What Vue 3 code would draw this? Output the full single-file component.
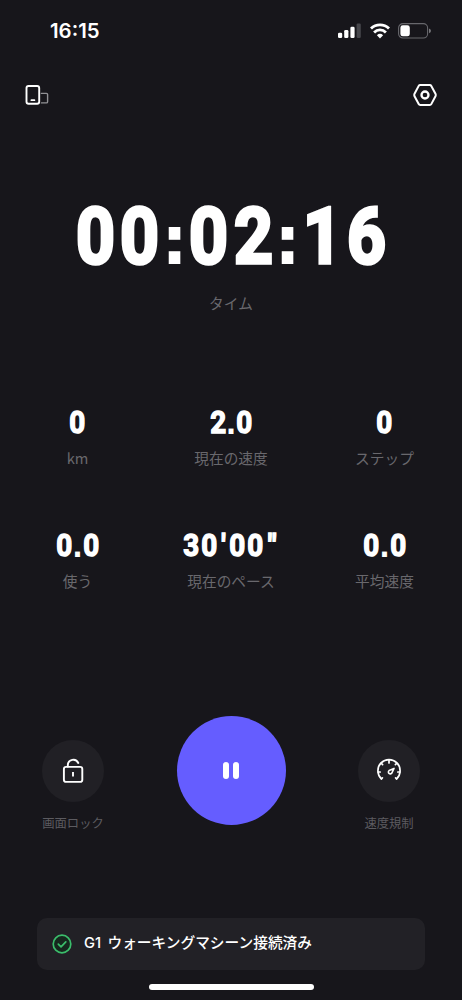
<script setup>
const timer = '00:02:16'
const stats = [
  { value: '0', label: 'km' },
  { value: '2.0', label: '現在の速度' },
  { value: '0', label: 'ステップ' },
  { value: '0.0', label: '使う' },
  { value: "30'00\"", label: '現在のペース' },
  { value: '0.0', label: '平均速度' },
]
const kinds = { ':': 'colon', '.': 'point', "'": 'prime', '"': 'double' }
const kind = (ch) => kinds[ch] || 'digit'
</script>

<template>
  <main class="screen">
    <header class="status">
      <span class="clock">16:15</span>
      <div class="indicators">
        <svg width="24" height="16" viewBox="0 0 24 16" fill="#fff">
          <rect x="0" y="9.7" width="4.2" height="5.3" rx="1.3" />
          <rect x="6.2" y="7" width="4.2" height="8" rx="1.3" />
          <rect x="12.4" y="3.7" width="4.2" height="11.3" rx="1.3" />
          <rect x="18.6" y="0.5" width="4.2" height="14.5" rx="1.3" fill="#46464b" />
        </svg>
        <svg class="wifi" width="20" height="16" viewBox="0 0 20 16" fill="none" stroke="#fff" stroke-width="2.8">
          <path d="M1 5.6A12.7 12.7 0 0 1 19 5.6" />
          <path d="M4.1 9.4A8.3 8.3 0 0 1 15.9 9.4" />
          <path d="M10 15.4L6.9 12.3A4.5 4.5 0 0 1 13.1 12.3Z" fill="#fff" stroke="none" />
        </svg>
        <svg class="battery" width="34" height="16" viewBox="0 0 34 16">
          <rect x="0.6" y="0.6" width="29" height="14.4" rx="4.3" fill="none" stroke="#68686d" stroke-width="1.1" />
          <rect x="2.4" y="2.3" width="9.4" height="11" rx="2.4" fill="#fff" />
          <path d="M31 5.4Q33 6 33 7.8Q33 9.6 31 10.2Z" fill="#77777b" />
        </svg>
      </div>
    </header>

    <nav class="toolbar">
      <svg width="26" height="24" viewBox="0 0 26 24" fill="none" stroke-linecap="round" stroke-linejoin="round">
        <rect x="2.5" y="3" width="12.7" height="17.8" rx="2.1" stroke="#fff" stroke-width="1.9" />
        <path d="M7.4 17.2H10.4" stroke="#fff" stroke-width="1.8" />
        <path d="M17.4 10.4H22.4Q23.6 10.4 23.6 11.6V18.7Q23.6 19.9 22.4 19.9H17.4" stroke="#919195" stroke-width="1.4" />
      </svg>
      <svg width="26" height="24" viewBox="0 0 26 24" fill="none" stroke="#fff" stroke-width="2" stroke-linejoin="round">
        <path d="M8.2 2H17.8Q18.8 2 19.3 2.9L23.6 11Q24 12 23.6 13L19.3 21.1Q18.8 22 17.8 22H8.2Q7.2 22 6.7 21.1L2.4 13Q2 12 2.4 11L6.7 2.9Q7.2 2 8.2 2Z" />
        <circle cx="13" cy="12" r="3.5" stroke-width="2.3" />
      </svg>
    </nav>

    <section class="timer">
      <div class="figures large"><span v-for="(ch, i) in timer" :key="i" :class="kind(ch)"><b>{{ ch }}</b></span></div>
      <div class="label">タイム</div>
    </section>

    <section class="stats">
      <div v-for="s in stats" :key="s.label" class="stat">
        <div class="figures"><span v-for="(ch, i) in s.value" :key="i" :class="kind(ch)"><b>{{ ch }}</b></span></div>
        <div class="label">{{ s.label }}</div>
      </div>
    </section>

    <section class="controls">
      <div class="control">
        <button class="round" aria-label="画面ロック">
          <svg width="26" height="28" viewBox="0 0 26 28" fill="none" stroke="#fff" stroke-width="1.9" stroke-linecap="round">
            <rect x="3.9" y="9.9" width="18.4" height="15" rx="2.2" />
            <path d="M7.8 9.6V8.2A5.5 5.5 0 0 1 18.3 6" />
            <path d="M13 15V19.4" stroke-linecap="butt" />
          </svg>
        </button>
        <span>画面ロック</span>
      </div>
      <button class="pause" aria-label="一時停止"><i></i><i></i></button>
      <div class="control">
        <button class="round" aria-label="速度規制">
          <svg width="28" height="28" viewBox="0 0 28 28" fill="none" stroke="#fff" stroke-width="1.7" stroke-linecap="round" stroke-linejoin="round">
            <path d="M6.4 21.8A11.1 11.1 0 1 1 21.6 21.8" />
            <path d="M14 3.3V6M6.4 6.4L7.6 7.6M21.6 6.4L20.4 7.6M3.3 15H5.2M24.7 15H22.8M6.4 21.8L7.4 20.8M21.6 21.8L20.6 20.8" />
            <path d="M19 11.4L16.9 16A1.9 1.9 0 1 1 14.1 13.5Z" stroke-width="1.6" />
          </svg>
        </button>
        <span>速度規制</span>
      </div>
    </section>

    <aside class="toast">
      <svg width="20" height="20" viewBox="0 0 20 20" fill="none" stroke="#3bbd6b" stroke-width="1.7" stroke-linecap="round" stroke-linejoin="round">
        <circle cx="10" cy="10" r="8.8" fill="#16281e" />
        <path d="M6.3 10.2L9 12.8L13.8 7.8" />
      </svg>
      <span class="message">G1 ウォーキングマシーン接続済み</span>
    </aside>
    <div class="home-bar"></div>
  </main>
</template>

<style>
body {
  background: #17161b;
}
</style>

<style scoped>
.screen {
  width: 462px;
  height: 1000px;
  overflow: hidden;
  box-sizing: border-box;
  display: flex;
  flex-direction: column;
  background: #17161b;
  color: #fff;
  font-family: "Noto Sans CJK JP", sans-serif;
}
svg {
  display: block;
  flex: none;
}
.status {
  height: 62px;
  flex: none;
  display: flex;
  justify-content: space-between;
  padding: 0 30px 0 50px;
}
.clock {
  margin-top: 19px;
  font: 600 20.4px/24px Inter, sans-serif;
}
.indicators {
  display: flex;
  gap: 8px;
  margin-top: 23px;
}
.toolbar {
  height: 24px;
  flex: none;
  margin-top: 21px;
  padding: 0 24px;
  display: flex;
  justify-content: space-between;
}
.timer {
  height: 119px;
  flex: none;
  margin-top: 88px;
}
.figures {
  display: flex;
  justify-content: center;
  height: 36px;
  font: 700 34px/37px Roboto, sans-serif;
}
.figures span {
  display: flex;
  justify-content: center;
  flex: none;
}
.figures b {
  font-size: 0.94em;
  font-weight: 700;
  transform: scaleX(0.87);
  -webkit-text-stroke: 0.045em #fff;
}
.digit {
  width: 0.534em;
}
.colon {
  width: 0.3em;
}
.point {
  width: 0.25em;
}
.prime {
  width: 0.28em;
}
.double {
  width: 0.45em;
}
.figures .colon b,
.figures .point b {
  font-family: "DejaVu Sans", sans-serif;
  font-size: 0.81em;
  -webkit-text-stroke: 0;
  transform: translateY(0.06em);
}
.figures .colon b {
  transform: translateY(0.08em) scaleX(0.97);
}
.figures.large {
  height: 84px;
  font-size: 83px;
  line-height: 83px;
}
.label {
  text-align: center;
  color: #69686d;
  font-size: 14.7px;
  line-height: 22px;
}
.timer .label {
  margin-top: 12.5px;
}
.stats {
  flex: none;
  display: grid;
  grid-template-columns: repeat(3, 153.5px);
  justify-content: center;
  grid-auto-rows: 123px;
  margin-top: 90px;
}
.stat .label {
  margin-top: 6.5px;
}
.controls {
  flex: none;
  height: 120px;
  margin-top: 66px;
  display: flex;
  justify-content: space-between;
  padding: 0 42px;
}
.control {
  width: 62px;
  display: flex;
  flex-direction: column;
  align-items: center;
  padding-top: 24px;
  color: #5c5b60;
  font-size: 12.3px;
  line-height: 20px;
  white-space: nowrap;
}
.control span {
  margin-top: 11px;
}
button {
  border: 0;
  padding: 0;
  border-radius: 50%;
  display: flex;
  align-items: center;
  justify-content: center;
  flex: none;
}
.round {
  width: 62px;
  height: 62px;
  background: #212025;
}
.pause {
  width: 109px;
  height: 109px;
  background: #655dff;
  gap: 4px;
}
.pause i {
  width: 6px;
  height: 17px;
  border-radius: 3px;
  background: #fff;
}
.toast {
  flex: none;
  height: 52px;
  margin: 82px 37px 0;
  padding-left: 15px;
  display: flex;
  align-items: center;
  gap: 12px;
  box-sizing: border-box;
  border-radius: 10px;
  background: #222126;
  font: 500 14.7px/22px Inter, "Noto Sans CJK JP", sans-serif;
}
.message {
  padding-bottom: 2px;
  word-spacing: 2.5px;
}
.home-bar {
  flex: none;
  width: 165px;
  height: 6px;
  margin: 14px auto 0;
  border-radius: 3px;
  background: #fff;
}
</style>
